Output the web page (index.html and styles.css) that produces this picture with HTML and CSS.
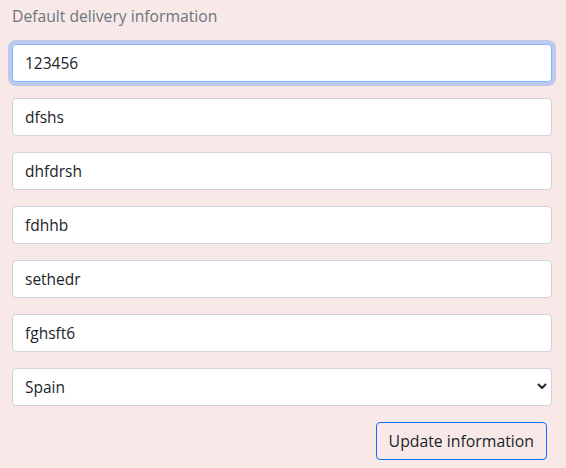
FILE: index.html
```html
<!DOCTYPE html>
<html>
<head>
<meta charset="utf-8">
<link rel="stylesheet" href="styles.css">
</head>
<body>
<form class="panel">
  <div class="title">Default delivery information</div>
  <input class="field focused" type="text" value="123456">
  <input class="field" type="text" value="dfshs">
  <input class="field" type="text" value="dhfdrsh">
  <input class="field" type="text" value="fdhhb">
  <input class="field" type="text" value="sethedr">
  <input class="field" type="text" value="fghsft6">
  <div class="select-wrap">
    <select class="field select">
      <option>Spain</option>
    </select>
    <svg class="chev" width="10" height="7" viewBox="0 0 10 7"><path d="M1.5 1.5 L5 5 L8.5 1.5" fill="none" stroke="#212529" stroke-width="2" stroke-linecap="round" stroke-linejoin="round"/></svg>
  </div>
  <div class="actions">
    <button type="button" class="btn">Update information</button>
  </div>
</form>
</body>
</html>
```
FILE: styles.css
```css
html, body {
  margin: 0;
  padding: 0;
  background: #f8e8e8;
}
body {
  font-family: "Open Sans", Lato, sans-serif;
  color: #212529;
}
.panel {
  display: flex;
  flex-direction: column;
  gap: 16px;
  padding: 4px 14px 0 12px;
}
.title {
  font-size: 15.7px;
  line-height: 24px;
  color: #6c757d;
}
.field {
  box-sizing: border-box;
  height: 38px;
  width: 100%;
  border: 1px solid #ced4da;
  border-radius: 4px;
  background: #fff;
  font-family: inherit;
  font-size: 15.5px;
  color: #212529;
  padding: 0 12px;
  margin: 0;
  outline: none;
}
.focused {
  border-color: #86b7fe;
  box-shadow: 0 0 0 4px rgba(13, 110, 253, 0.25);
}
.select-wrap {
  position: relative;
}
.select {
  appearance: none;
  -webkit-appearance: none;
  display: block;
}
.chev {
  position: absolute;
  right: 5px;
  top: 15px;
  pointer-events: none;
}
.actions {
  display: flex;
  justify-content: flex-end;
  padding-right: 5px;
}
.btn {
  box-sizing: border-box;
  height: 38px;
  padding: 0 12px;
  border: 1px solid #0d6efd;
  border-radius: 4px;
  background: transparent;
  font-family: inherit;
  font-size: 15.8px;
  color: #212529;
}
```
